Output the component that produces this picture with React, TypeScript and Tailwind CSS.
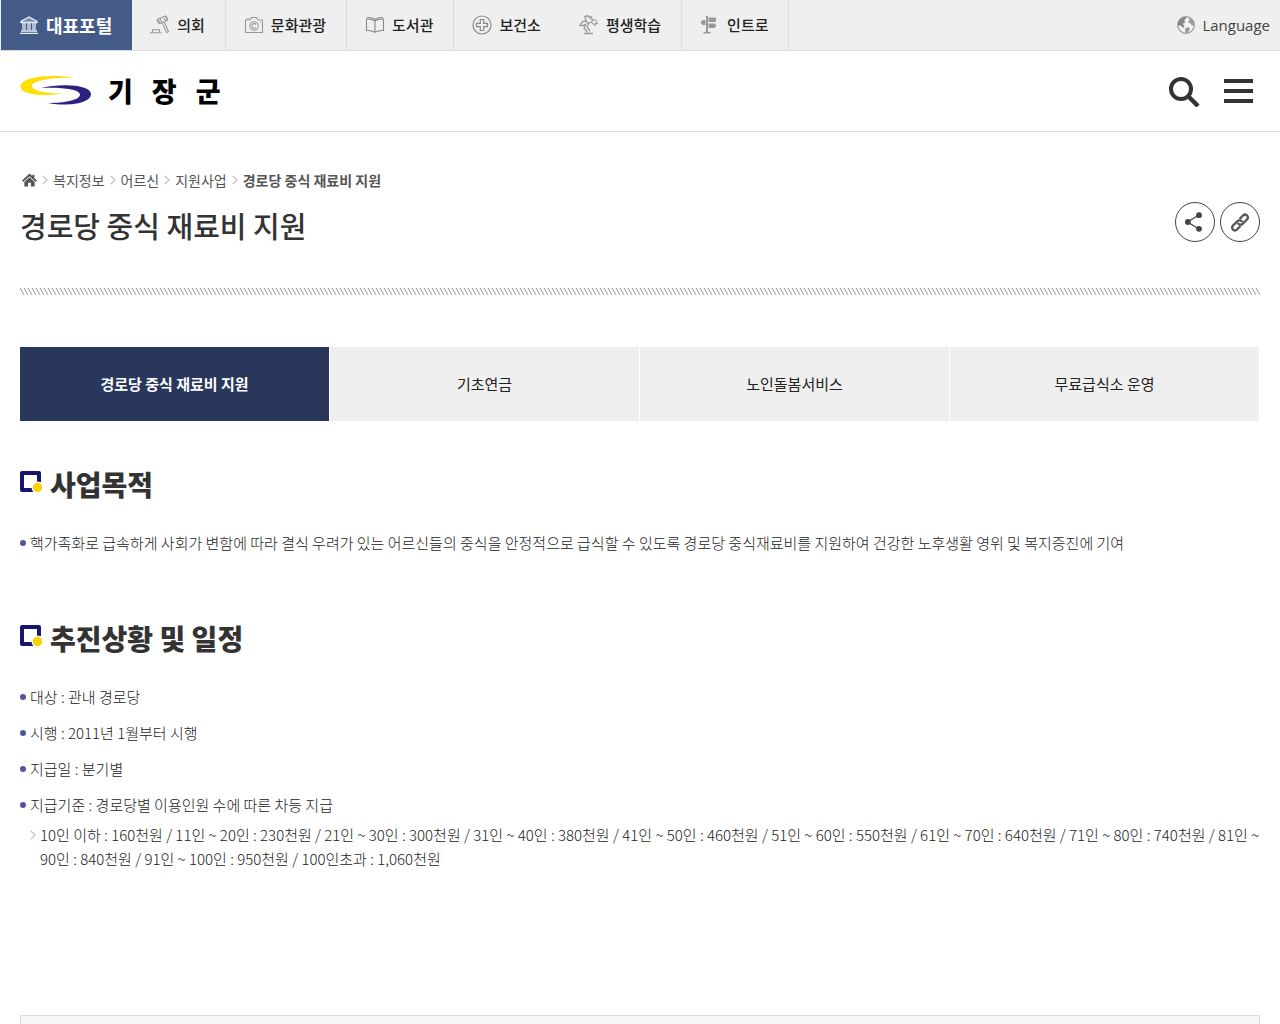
import React from 'react';

const BankIcon = () => (
  <svg width="20" height="20" viewBox="0 0 20 20" fill="none" stroke="#e6f0fb" strokeWidth="1.3">
    <path d="M2 7.5V6.5L10 2L18 6.5V7.5Z" fill="#e6f0fb" fillOpacity="0.35" />
    <path d="M4 8V15M6 8V15M9 8V15M11 8V15M14 8V15M16 8V15" />
    <path d="M2 16H18M1 18.3H19" />
  </svg>
);

const GavelIcon = () => (
  <svg width="20" height="20" viewBox="0 0 20 20" fill="none" stroke="#999" strokeWidth="1.1">
    <path d="M8 4L15.500 1L17.500 5.500L10 8.500Z M10 3.300L12 7.700M13.500 1.800L15.500 6.300" />
    <path d="M6.800 4.500L9 9M16 1L18 5M12.300 8L16.500 17.500L18.500 16.700L14.500 7" />
    <path d="M2.500 17V14.800H9.500V17M0 17.800H11.500" />
  </svg>
);

const CameraIcon = () => (
  <svg width="20" height="20" viewBox="0 0 20 20" fill="none" stroke="#999" strokeWidth="1.1">
    <path d="M1.500 5H6L7.500 2.500H12.500L14 5H18.500V17.500H1.500Z" />
    <path d="M3 3.500H5" />
    <circle cx="10" cy="11" r="4.300" />
    <path d="M12 9.500A2.400 2.400 0 1 0 12 12.500M16 7.300H17" />
  </svg>
);

const BookIcon = () => (
  <svg width="20" height="20" viewBox="0 0 20 20" fill="none" stroke="#888" strokeWidth="1.1">
    <path d="M10 6C7.500 4.500 4 3.800 1.500 4V15.500C4 15.300 7.500 15.800 10 17.300C12.500 15.800 16 15.300 18.500 15.500V4C16 3.800 12.500 4.500 10 6ZM10 6V17" />
    <path d="M2 2.500C5 2.300 8 3 10 4.500C12 3 15 2.300 18 2.500" />
  </svg>
);

const HealthIcon = () => (
  <svg width="20" height="20" viewBox="0 0 20 20" fill="none" stroke="#888" strokeWidth="1.200">
    <circle cx="10" cy="10" r="9" />
    <path d="M8.300 4.500H11.700V8.300H15.500V11.700H11.700V15.500H8.300V11.700H4.500V8.300H8.300Z" />
  </svg>
);

const LearningIcon = () => (
  <svg width="20" height="20" viewBox="0 0 20 20" fill="none" stroke="#999" strokeWidth="1.300">
    <path d="M6 1.500L9 0.800L11.500 3.500L14 4.500L12.500 7L9.500 8.500L7 6Z" />
    <path d="M7 6L3.500 6.500L1 10.500H4L6.500 9.500L5 13L8.500 17.500M9.500 8.500L8 12L11 16M5 18.500H14" />
    <path d="M14 4.500L18.500 6M13 8L17 10.500M16 8L19 8.500M11.500 1L13 2.500" />
  </svg>
);

const SignIcon = () => (
  <svg width="20" height="20" viewBox="0 0 20 20" fill="#999">
    <path d="M6 1H8V17H10.500V18.500H3.500V17H6Z" />
    <path d="M8.500 2.500H16V7H8.500ZM8.500 8.500H14.500L16.500 10.500L14.500 13H8.500ZM5.500 5H2.500L0.500 7.500L2.500 10H5.500Z" />
  </svg>
);

const GlobeIcon = () => (
  <svg width="20" height="20" viewBox="0 0 20 20">
    <circle cx="10" cy="10" r="8.300" fill="#f4f4f4" stroke="#999" strokeWidth="1.300" />
    <path d="M2 8C2.500 4.500 6 2 9.500 2L10.500 3.500L8 5L9.500 7L6.500 9L8.500 10.500L7.500 13L5 11L2 10Z" fill="#888" />
    <path d="M13 2.500L17 5.500L18 10L16 10.500L14 8L12 7.500L13.500 5ZM9 13.500L12.500 12L14 14L12 17.500L9.500 18Z" fill="#999" />
  </svg>
);

const siteLinks = [
  { label: '의회', icon: <GavelIcon />, border: true },
  { label: '문화관광', icon: <CameraIcon />, border: true },
  { label: '도서관', icon: <BookIcon />, border: true },
  { label: '보건소', icon: <HealthIcon />, border: false },
  { label: '평생학습', icon: <LearningIcon />, border: true },
  { label: '인트로', icon: <SignIcon />, border: true },
];

const breadcrumbs = ['복지정보', '어르신', '지원사업'];

const tabs = ['경로당 중식 재료비 지원', '기초연금', '노인돌봄서비스', '무료급식소 운영'];

const schedule = [
  '대상 : 관내 경로당',
  '시행 : 2011년 1월부터 시행',
  '지급일 : 분기별',
  '지급기준 : 경로당별 이용인원 수에 따른 차등 지급',
];

const Chevron = ({ className }: { className?: string }) => (
  <svg className={className} width="6" height="10" viewBox="0 0 6 10" fill="none" stroke="#c4c4c4" strokeWidth="1.300">
    <path d="M0.700 0.700L5 5L0.700 9.300" />
  </svg>
);

const SectionTitle = ({ children }: { children: React.ReactNode }) => (
  <h2 className="flex items-start gap-[7px] text-[28px] leading-[38px] font-black text-[#333]">
    <svg className="mt-1 shrink-0" width="23" height="24" viewBox="0 0 23 24">
      <path d="M19 13V4H2V21H13" fill="none" stroke="#16166f" strokeWidth="4" strokeLinejoin="round" />
      <circle cx="17.500" cy="18.500" r="6" fill="#fff" />
      <circle cx="17.500" cy="18.500" r="4.700" fill="#fdd000" />
    </svg>
    {children}
  </h2>
);

const Bullet = () => <span className="mt-[9px] size-[6px] shrink-0 rounded-full bg-[#54549c]" />;

const App: React.FC = () => {
  return (
    <div className="min-h-screen bg-white font-['Noto_Sans_CJK_KR',sans-serif] text-[#333]">
      <nav className="flex h-[51px] items-stretch justify-between border-b border-[#ddd] bg-[#efefef]">
        <ul className="flex pl-px">
          <li>
            <a href="#" className="flex h-[50px] items-center gap-[7px] bg-[#455b87] pr-5 pl-[18px] text-lg font-bold text-white">
              <BankIcon />
              대표포털
            </a>
          </li>
          {siteLinks.map((link) => (
            <li key={link.label} className={link.border ? 'border-r border-[#ddd]' : ''}>
              <a href="#" className="flex h-[50px] items-center gap-[7px] pr-5 pl-[18px] text-[15px] font-medium text-[#222]">
                {link.icon}
                {link.label}
              </a>
            </li>
          ))}
        </ul>
        <button type="button" className="flex items-center gap-[6px] pr-[10px] font-['Open_Sans',sans-serif] text-[15px] font-medium text-[#444]">
          <GlobeIcon />
          Language
        </button>
      </nav>

      <header className="flex h-[81px] items-center justify-between border-b border-[#ddd] pr-[27px] pl-5">
        <a href="#" className="flex items-center gap-4">
          <svg width="72" height="30" viewBox="0 0 72 30">
            <path d="M55 2C35 -2 0 0 0.500 11C1 18 20 21 43 17.500C27 17.500 12 15 12 10C12 4 35 1 55 2Z" fill="#ffdf00" />
            <path d="M21 12C42 7 71 9 71 18C71 27 49 31 28 27C45 27 60 24 60 18.500C60 13 40 11 21 12Z" fill="#2b2180" />
          </svg>
          <span className="flex gap-[19px] text-[27px] leading-8 font-black text-black">
            <span>기</span>
            <span>장</span>
            <span>군</span>
          </span>
        </a>
        <div className="flex items-center gap-6">
          <button type="button" aria-label="검색">
            <svg width="32" height="32" viewBox="0 0 32 32" fill="none" stroke="#333" strokeWidth="4">
              <circle cx="13" cy="14" r="10" />
              <path d="M20 21L30 31" strokeWidth="4.500" />
            </svg>
          </button>
          <button type="button" aria-label="전체메뉴" className="flex flex-col gap-[6px]">
            <span className="h-1 w-[29px] bg-[#333]" />
            <span className="h-1 w-[29px] bg-[#333]" />
            <span className="h-1 w-[29px] bg-[#333]" />
          </button>
        </div>
      </header>

      <main className="px-5 pt-9">
        <div className="flex items-center gap-[5px] text-sm leading-6 text-[#555]">
          <a href="#" aria-label="홈" className="pl-[2px]">
            <svg width="15" height="14" viewBox="0 0 16 14" fill="#555">
              <path d="M8 0L11 2.800V1.500H13.200V5L16 7.500L14.700 9L8 3L1.300 9L0 7.500Z" />
              <path d="M8 4L13.500 9V14H9.500V10H6.500V14H2.500V9Z" />
            </svg>
          </a>
          {breadcrumbs.map((item) => (
            <React.Fragment key={item}>
              <Chevron />
              <a href="#">{item}</a>
            </React.Fragment>
          ))}
          <Chevron />
          <strong className="font-bold">경로당 중식 재료비 지원</strong>
        </div>

        <div className="flex items-start justify-between pt-[10px]">
          <h1 className="pt-1 text-[29px] leading-[38px] font-medium text-[#333]">경로당 중식 재료비 지원</h1>
          <div className="flex gap-[5px]">
            <button type="button" aria-label="공유" className="flex size-10 items-center justify-center rounded-full border border-[#444]">
              <svg width="20" height="20" viewBox="0 0 20 20" fill="#444">
                <path d="M14 3L2.500 10L14 17" fill="none" stroke="#444" strokeWidth="1.300" />
                <circle cx="2.900" cy="10" r="2.900" />
                <circle cx="14" cy="3.200" r="2.900" />
                <circle cx="14" cy="16.800" r="2.900" />
              </svg>
            </button>
            <button type="button" aria-label="링크 복사" className="flex size-10 items-center justify-center rounded-full border border-[#444]">
              <svg width="20" height="20" viewBox="0 0 20 20" fill="none" stroke="#555" strokeWidth="2.300">
                <path d="M9.500 7L13 3.500C15.500 1 19.500 4.500 17 7.500L12.500 11.800C11 13.200 8.700 12.800 7.800 11" />
                <path d="M10.500 14L7 17.500C4.500 20 0.500 16.500 3 13.500L7.500 9.200C9 7.800 11.300 8.200 12.200 10" />
              </svg>
            </button>
          </div>
        </div>

        <svg className="mt-11 block w-full" height="7" aria-hidden="true">
          <defs>
            <pattern id="hatch" width="4" height="7" patternUnits="userSpaceOnUse">
              <path d="M-4 0L0 7M0 0L4 7M4 0L8 7" stroke="#999" strokeWidth="1" />
            </pattern>
          </defs>
          <rect width="100%" height="7" fill="url(#hatch)" />
        </svg>

        <ul className="mt-[52px] grid grid-cols-4">
          {tabs.map((tab, i) => (
            <li key={tab} className="border-r border-white">
              <a
                href="#"
                className={
                  i === 0
                    ? 'flex h-[74px] items-center justify-center bg-[#2a375c] text-[15px] font-bold text-white'
                    : 'flex h-[74px] items-center justify-center bg-[#efefef] text-[15px] text-[#222]'
                }
              >
                {tab}
              </a>
            </li>
          ))}
        </ul>

        <section className="pt-11">
          <SectionTitle>사업목적</SectionTitle>
          <ul className="pt-7 text-[15px] leading-6 font-light text-[#222]">
            <li className="flex gap-1">
              <Bullet />
              핵가족화로 급속하게 사회가 변함에 따라 결식 우려가 있는 어르신들의 중식을 안정적으로 급식할 수 있도록 경로당 중식재료비를 지원하여 건강한 노후생활 영위 및 복지증진에 기여
            </li>
          </ul>
        </section>

        <section className="pt-16">
          <SectionTitle>추진상황 및 일정</SectionTitle>
          <ul className="flex flex-col gap-3 pt-7 text-[15px] leading-6 font-light text-[#222]">
            {schedule.map((item) => (
              <li key={item} className="flex gap-1">
                <Bullet />
                {item}
              </li>
            ))}
          </ul>
          <ul className="pt-[6px] pl-[10px] text-[15px] leading-6 font-light break-keep text-[#222]">
            <li className="flex gap-1">
              <Chevron className="mt-[7px] shrink-0" />
              <span>
                10인 이하 : 160천원 / 11인 ~ 20인 : 230천원 / 21인 ~ 30인 : 300천원 / 31인 ~ 40인 : 380천원 / 41인 ~ 50인 : 460천원 / 51인 ~ 60인 : 550천원 / 61인 ~ 70인 : 640천원 / 71인 ~ 80인 : 740천원 / 81인 ~ 90인 : 840천원 / 91인 ~ 100인 : 950천원 / 100인초과 : 1,060천원
              </span>
            </li>
          </ul>
        </section>

        <div className="mt-36 h-24 border border-[#ddd] bg-[#f7f7f7]" />
      </main>
    </div>
  );
};

export default App;
